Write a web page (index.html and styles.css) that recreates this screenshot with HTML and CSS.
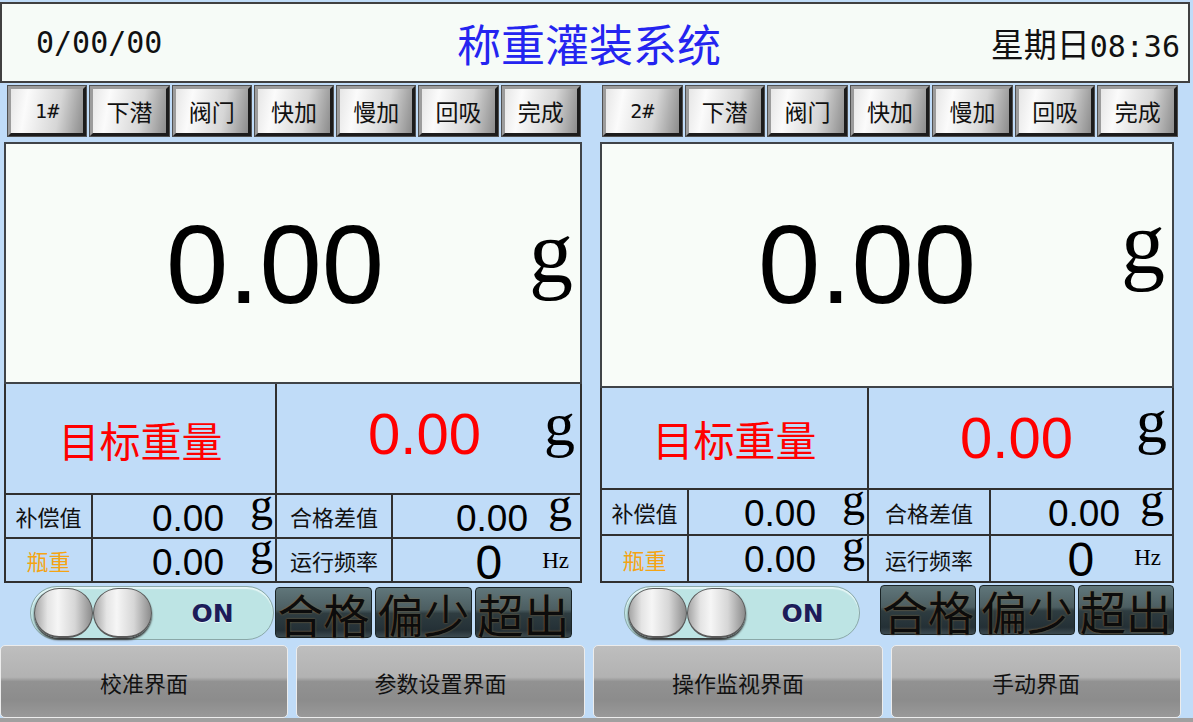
FILE: index.html
```html
<!DOCTYPE html>
<html lang="zh-CN">
<head>
  <meta charset="UTF-8">
  <title>称重灌装系统</title>
  <link rel="stylesheet" href="styles.css">
</head>
<body>
<div class="screen">
  <header class="topbar">
    <div class="date">0/00/00</div>
    <h1 class="title">称重灌装系统</h1>
    <div class="clock"><span class="week">星期日</span>08:36</div>
  </header>

  <div class="panels">
    <section class="panel panel-a">
      <div class="steps">
        <button class="step step-no">1#</button>
        <button class="step">下潜</button>
        <button class="step">阀门</button>
        <button class="step">快加</button>
        <button class="step">慢加</button>
        <button class="step">回吸</button>
        <button class="step">完成</button>
      </div>
      <div class="display">
        <span class="display-num">0.00</span>
        <span class="display-unit">g</span>
      </div>
      <div class="table">
        <div class="cell target-label">目标重量</div>
        <div class="cell target-value"><span class="num">0.00</span><span class="unit">g</span></div>
        <div class="cell label">补偿值</div>
        <div class="cell value"><span class="num">0.00</span><span class="unit">g</span></div>
        <div class="cell label">合格差值</div>
        <div class="cell value value-r"><span class="num">0.00</span><span class="unit">g</span></div>
        <div class="cell label label-orange">瓶重</div>
        <div class="cell value"><span class="num">0.00</span><span class="unit">g</span></div>
        <div class="cell label">运行频率</div>
        <div class="cell value value-r freq"><span class="num">0</span><span class="unit">Hz</span></div>
      </div>
      <div class="status">
        <div class="toggle">
          <span class="knob"><i></i><i></i></span>
          <span class="toggle-text">ON</span>
        </div>
        <div class="results">
          <button class="result">合格</button>
          <button class="result">偏少</button>
          <button class="result">超出</button>
        </div>
      </div>
    </section>

    <section class="panel panel-b">
      <div class="steps">
        <button class="step step-no">2#</button>
        <button class="step">下潜</button>
        <button class="step">阀门</button>
        <button class="step">快加</button>
        <button class="step">慢加</button>
        <button class="step">回吸</button>
        <button class="step">完成</button>
      </div>
      <div class="display">
        <span class="display-num">0.00</span>
        <span class="display-unit">g</span>
      </div>
      <div class="table">
        <div class="cell target-label">目标重量</div>
        <div class="cell target-value"><span class="num">0.00</span><span class="unit">g</span></div>
        <div class="cell label">补偿值</div>
        <div class="cell value"><span class="num">0.00</span><span class="unit">g</span></div>
        <div class="cell label">合格差值</div>
        <div class="cell value value-r"><span class="num">0.00</span><span class="unit">g</span></div>
        <div class="cell label label-orange">瓶重</div>
        <div class="cell value"><span class="num">0.00</span><span class="unit">g</span></div>
        <div class="cell label">运行频率</div>
        <div class="cell value value-r freq"><span class="num">0</span><span class="unit">Hz</span></div>
      </div>
      <div class="status">
        <div class="toggle">
          <span class="knob"><i></i><i></i></span>
          <span class="toggle-text">ON</span>
        </div>
        <div class="results">
          <button class="result">合格</button>
          <button class="result">偏少</button>
          <button class="result">超出</button>
        </div>
      </div>
    </section>
  </div>

  <nav class="nav">
    <button class="nav-btn">校准界面</button>
    <button class="nav-btn">参数设置界面</button>
    <button class="nav-btn">操作监视界面</button>
    <button class="nav-btn">手动界面</button>
  </nav>
</div>
</body>
</html>
```

FILE: styles.css
```css
body {
  margin: 0;
  background: #c0dcf8;
  font-family: "Noto Sans CJK SC", sans-serif;
  overflow: hidden;
}
button {
  font-family: inherit;
  padding: 0;
  cursor: pointer;
}
.screen {
  width: 1193px;
  height: 722px;
  overflow: hidden;
}

/* header */
.topbar {
  margin-top: 2px;
  width: 1190px;
  height: 81px;
  box-sizing: border-box;
  border: 2px solid #404040;
  background: #f6fbf7;
  display: grid;
  grid-template-columns: 1fr auto 1fr;
  align-items: center;
}
.date {
  padding-left: 34px;
  font: 30px "DejaVu Sans Mono", monospace;
  color: #111;
}
.title {
  margin: 0 12px 0 0;
  font-size: 44px;
  font-weight: normal;
  color: #2424f0;
  line-height: 1;
}
.clock {
  justify-self: end;
  padding-right: 8px;
  font: 30px "DejaVu Sans Mono", "Noto Sans CJK SC", monospace;
  color: #111;
}
.week {
  font: 33px "Noto Sans CJK SC", sans-serif;
}

/* panels */
.panels {
  display: flex;
  padding-left: 4px;
}
.panel-a {
  width: 578px;
}
.panel-b {
  width: 574px;
  margin-left: 18px;
}
.steps {
  display: flex;
  gap: 4px;
  height: 50px;
  margin-top: 3px;
}
.panel-a .steps {
  width: 572px;
  margin-left: 4px;
}
.panel-b .steps {
  width: 574px;
  margin-left: 3px;
}
.step {
  flex: 1;
  box-sizing: border-box;
  border: 3px solid;
  border-color: #9c9c9c #1c1c1c #1c1c1c #9c9c9c;
  box-shadow: 0 0 0 1px #505050;
  background: linear-gradient(100deg, #e6e6e6 0%, #fbfbfb 22%, #d6d6d6 65%, #8c8c8c 100%);
  font-size: 23px;
  line-height: 1;
  color: #111;
}
.step-no {
  font: 20px "DejaVu Sans Mono", monospace;
}

/* weight display */
.display {
  margin-top: 6px;
  height: 242px;
  box-sizing: border-box;
  border: 2px solid #404448;
  background: #f8fcf8;
  display: flex;
  justify-content: flex-end;
  align-items: flex-start;
  padding-right: 7px;
}
.panel-b .display {
  height: 246px;
}
.display-num {
  margin-top: 65px;
  font: 112px/1 "Liberation Sans", sans-serif;
  color: #000;
}
.display-unit {
  margin-top: 65px;
  margin-left: 145px;
  font: 88px/1 "Liberation Serif", serif;
  color: #000;
}
.panel-b .display-unit {
  margin-top: 56px;
}

/* data table */
.table {
  display: grid;
  grid-template-columns: 87px 184px 116px 189px;
  grid-template-rows: 111px 44px 44px;
  border-left: 2px solid #303030;
}
.panel-b .table {
  grid-template-columns: 87px 180px 122px 183px;
  grid-template-rows: 102px 46px 47px;
}
.cell {
  box-sizing: border-box;
  border-right: 2px solid #303030;
  border-bottom: 2px solid #303030;
  min-width: 0;
}
.target-label {
  grid-column: span 2;
  display: flex;
  align-items: center;
  justify-content: center;
  font-size: 41px;
  color: #ff0000;
}
.target-value {
  grid-column: span 2;
  display: flex;
  justify-content: flex-end;
  align-items: flex-start;
  padding-right: 5px;
}
.target-value .num {
  margin-top: 21px;
  font: 58px/1 "Liberation Sans", sans-serif;
  color: #ff0000;
}
.target-value .unit {
  margin-top: 9px;
  margin-left: 63px;
  font: 62px/1 "Liberation Serif", serif;
}
.panel-b .target-value .unit {
  margin-top: 2px;
}
.label {
  display: flex;
  align-items: center;
  justify-content: center;
  font-size: 22px;
  color: #111;
}
.label-orange {
  color: #f4a414;
}
.value {
  display: flex;
  justify-content: flex-end;
  align-items: flex-start;
  padding-right: 2px;
}
.value .num {
  margin-top: 5px;
  font: 37px/1 "Liberation Sans", sans-serif;
}
.value .unit {
  margin-top: -6px;
  margin-left: 26px;
  font: 46px/0.7 "Liberation Serif", serif;
}
.value-r {
  padding-right: 8px;
}
.value-r .unit {
  margin-top: -7px;
  margin-left: 20px;
  font-size: 48px;
}
.freq {
  padding-right: 11px;
}
.freq .num {
  margin-top: 5px;
  font-size: 48px;
  line-height: 0.8;
}
.freq .unit {
  margin-top: 14px;
  margin-left: 40px;
  font-size: 23px;
}

/* status row */
.status {
  display: flex;
  align-items: flex-start;
  height: 56px;
}
.toggle {
  margin-top: 3px;
  margin-left: 26px;
  width: 244px;
  height: 54px;
  box-sizing: border-box;
  border: 1px solid #8aa8a8;
  border-radius: 27px;
  background: #bde4e4;
  box-shadow: inset 0 2px 1px #e6f6f6;
  display: flex;
  align-items: center;
}
.panel-b .toggle {
  margin-left: 24px;
  width: 238px;
}
.knob {
  display: flex;
  width: 118px;
  height: 50px;
  margin-left: 3px;
  border-radius: 25px;
  box-shadow: 0 2px 2px #333;
}
.knob i {
  flex: 1;
  border: 1px solid #5a5a5a;
  border-bottom-width: 2px;
  border-radius: 25px;
  background: linear-gradient(90deg, #a4a4a4 0%, #e4e4e4 22%, #f6f6f6 40%, #d6d6d6 70%, #8c8c8c 100%);
}
.toggle-text {
  flex: 1;
  text-align: center;
  font: bold 25px "DejaVu Sans", sans-serif;
  color: #1c1c5a;
  text-shadow: 0 1px 0 #e8f8f8;
}
.results {
  display: flex;
  gap: 3px;
  margin-top: 4px;
  margin-left: 1px;
}
.panel-b .results {
  margin-top: 2px;
  margin-left: 20px;
}
.result {
  width: 97px;
  height: 51px;
  box-sizing: border-box;
  border: 1px solid #1a2426;
  border-radius: 4px;
  background: linear-gradient(to bottom, #60767a 0%, #4c5e62 44%, #2e3c40 52%, #243036 86%, #3c4a50 100%);
  font-size: 46px;
  line-height: 1;
  color: #0c0c0c;
  text-shadow: 0 0 2px #8c6a3c;
}
.panel-b .result {
  width: 96px;
  height: 50px;
}

/* bottom navigation */
.nav {
  display: grid;
  grid-template-columns: 288px 289px 290px 290px;
  column-gap: 8px;
  margin-top: 6px;
  height: 73px;
  border-bottom: 4px solid #a0a0a0;
}
.nav-btn {
  box-sizing: border-box;
  border: 1px solid #ececec;
  border-radius: 5px;
  background: linear-gradient(to bottom, #bebebe 0%, #b2b2b2 44%, #929292 50%, #8c8c8c 76%, #999 100%);
  font-size: 22px;
  color: #111;
}
```
